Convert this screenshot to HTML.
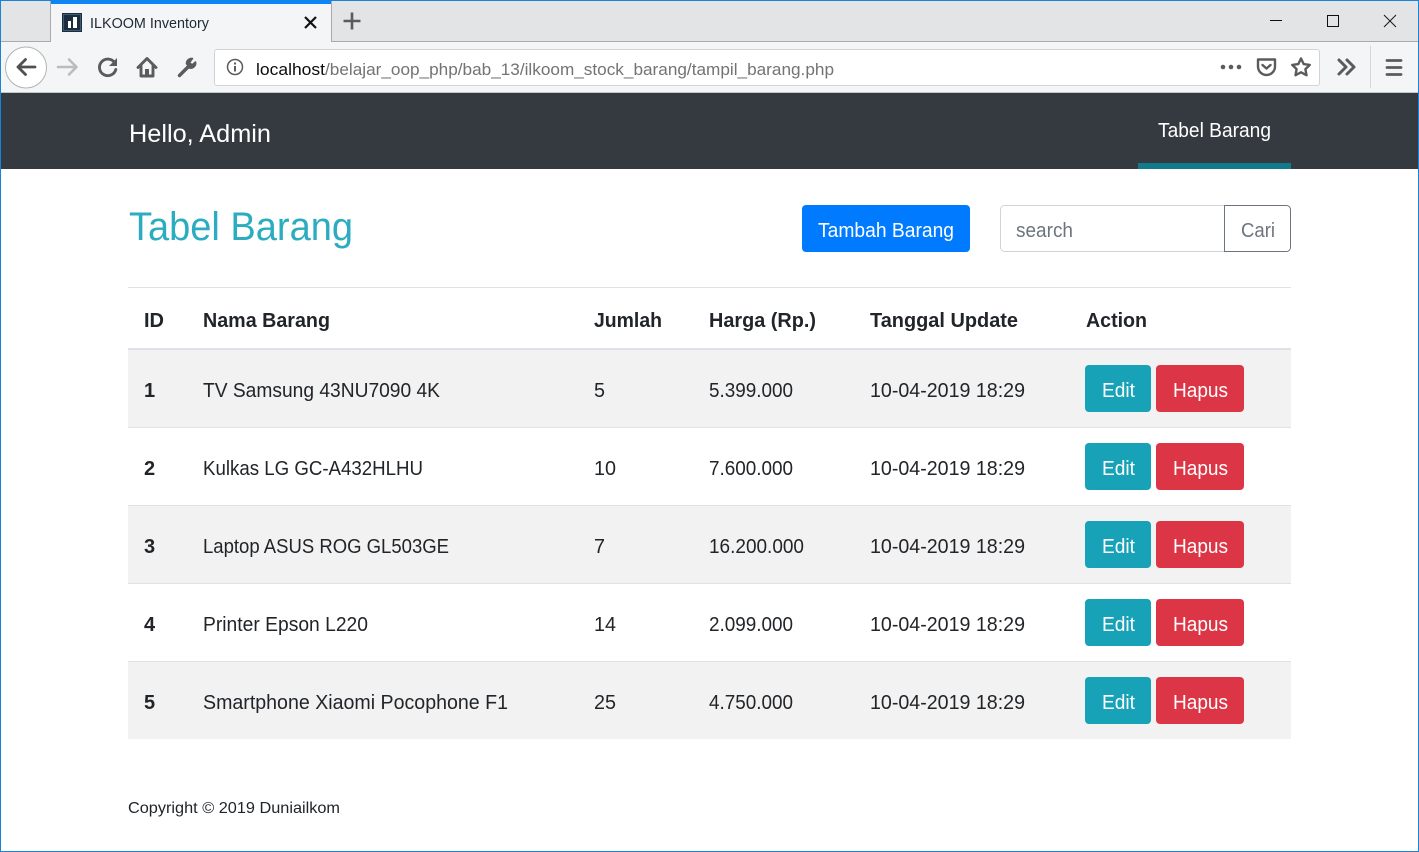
<!DOCTYPE html>
<html lang="en"><head><meta charset="utf-8"><title>ILKOOM Inventory</title>
<style>
html,body{margin:0;padding:0;width:1419px;height:852px;overflow:hidden;background:#fff}
svg{display:block;position:absolute;left:0;top:0}
text{font-family:"Liberation Sans",Arial,sans-serif;fill:#212529;font-size:20px;white-space:pre}
.h{font-weight:700}
.w{fill:#fff}
</style></head><body>
<svg width="1419" height="852" viewBox="0 0 1419 852" xmlns="http://www.w3.org/2000/svg">
<rect width="1419" height="852" fill="#fff"/>
<!-- tab bar -->
<rect x="0" y="0" width="1419" height="41" fill="#e3e4e6"/>
<rect x="0" y="41" width="1419" height="1" fill="#a9aaac"/>
<rect x="50" y="1" width="1" height="41" fill="#a9aaac"/>
<rect x="331" y="1" width="1" height="41" fill="#a9aaac"/>
<rect x="51" y="1" width="280" height="41" fill="#f4f5f7"/>
<rect x="51" y="1" width="280" height="3" fill="#0a84ff"/>
<!-- favicon -->
<rect x="62" y="13" width="20" height="19" fill="#1b2c40"/>
<rect x="63.500" y="14.500" width="17" height="16" fill="none" stroke="#3c5f6e" stroke-width="1"/>
<rect x="68" y="21" width="3" height="7" fill="#fff"/>
<rect x="73" y="17" width="4" height="11" fill="#fff"/>
<text x="90" y="28" textLength="119" lengthAdjust="spacingAndGlyphs" style="font-size:15px;fill:#1f2a33">ILKOOM Inventory</text>
<path d="M305 17L316 28M316 17L305 28" stroke="#111" stroke-width="2.200" fill="none"/>
<path d="M352 12.500V29.500M343.500 21H360.500" stroke="#5b5b5e" stroke-width="2.600" fill="none"/>
<!-- window controls -->
<path d="M1270 20.500H1282" stroke="#111" stroke-width="1" fill="none"/>
<rect x="1327.500" y="15.500" width="11" height="11" stroke="#111" stroke-width="1" fill="none"/>
<path d="M1384 15L1396 27M1396 15L1384 27" stroke="#222" stroke-width="1.100" fill="none"/>
<!-- toolbar -->
<rect x="0" y="42" width="1419" height="50" fill="#f4f5f7"/>
<rect x="0" y="92" width="1419" height="1" fill="#c4c5c7"/>
<circle cx="26" cy="67.500" r="20.500" fill="#fff" stroke="#b3b3b3" stroke-width="1"/>
<path d="M18 67H35M25.500 59.500L18 67L25.500 74.500" fill="none" stroke="#505053" stroke-width="2.800" stroke-linecap="round" stroke-linejoin="round"/>
<path d="M58 67H76M69 59.500L76.500 67L69 74.500" fill="none" stroke="#bcbcbe" stroke-width="2.600" stroke-linecap="round" stroke-linejoin="round"/>
<path d="M114.500 62.500A8.300 8.300 0 1 0 115.800 69.500" fill="none" stroke="#5b5b5e" stroke-width="2.900" stroke-linecap="round"/>
<path d="M117 58V66H109Z" fill="#5b5b5e"/>
<path d="M138 67.500L147 58.500L156 67.500M141 65.500V76H153V65.500" fill="none" stroke="#5b5b5e" stroke-width="2.900" stroke-linecap="round" stroke-linejoin="round"/>
<rect x="145" y="69" width="4" height="7.500" fill="#5b5b5e"/>
<path d="M179.500 75.500L188.500 66.500" stroke="#5b5b5e" stroke-width="3.400" stroke-linecap="round" fill="none"/>
<path d="M186.500 63.500A5 5 0 0 1 192.500 58.500L189.500 62.500L192 65L195.500 62A5 5 0 0 1 189.500 68Z" fill="#5b5b5e" stroke="#5b5b5e" stroke-width="1.600" stroke-linejoin="round"/>
<!-- url bar -->
<rect x="214.500" y="49.500" width="1105" height="36" rx="2.500" fill="#fff" stroke="#d2d3d5"/>
<circle cx="235" cy="67" r="7.500" fill="none" stroke="#5b5b5e" stroke-width="1.500"/>
<rect x="234" y="66" width="2" height="5.500" fill="#5b5b5e"/>
<rect x="234" y="62.500" width="2" height="2" fill="#5b5b5e"/>
<text x="256" y="75" textLength="69" lengthAdjust="spacingAndGlyphs" style="font-size:17px;fill:#0c0c0d">localhost</text>
<text x="325" y="75" textLength="509" lengthAdjust="spacingAndGlyphs" style="font-size:17px;fill:#737373">/belajar_oop_php/bab_13/ilkoom_stock_barang/tampil_barang.php</text>
<circle cx="1223" cy="67" r="2.300" fill="#5b5b5e"/><circle cx="1231" cy="67" r="2.300" fill="#5b5b5e"/><circle cx="1239" cy="67" r="2.300" fill="#5b5b5e"/>
<path d="M1258 59.500H1275V66.500A8.500 8.500 0 0 1 1258 66.500Z" fill="none" stroke="#5b5b5e" stroke-width="2.400" stroke-linejoin="round"/>
<path d="M1262.500 65L1266.500 68.500L1270.500 65" fill="none" stroke="#5b5b5e" stroke-width="2.400" stroke-linecap="round" stroke-linejoin="round"/>
<path d="M1301 58.500L1303.700 64.100L1309.800 64.900L1305.400 69.100L1306.500 75.200L1301 72.300L1295.500 75.200L1296.600 69.100L1292.200 64.900L1298.300 64.100Z" fill="none" stroke="#5b5b5e" stroke-width="2.400" stroke-linejoin="round"/>
<path d="M1339 60L1346 67L1339 74M1347 60L1354 67L1347 74" fill="none" stroke="#5b5b5e" stroke-width="3" stroke-linecap="round" stroke-linejoin="round"/>
<rect x="1370" y="46" width="1" height="42" fill="#d4d5d7"/>
<path d="M1387 60.500H1401M1387 67.500H1401M1387 74.500H1401" stroke="#5b5b5e" stroke-width="2.800" stroke-linecap="round" fill="none"/>
<!-- navbar -->
<rect x="0" y="93" width="1419" height="76" fill="#343a40"/>
<rect x="1138" y="163" width="153" height="6" fill="#117a8b"/>
<text x="129" y="142" textLength="142" lengthAdjust="spacingAndGlyphs" class="w" style="font-size:25px">Hello, Admin</text>
<text x="1158" y="137" textLength="113" lengthAdjust="spacingAndGlyphs" class="w">Tabel Barang</text>
<!-- heading -->
<text x="129" y="240" textLength="224" lengthAdjust="spacingAndGlyphs" style="font-size:40px;fill:#2bacc0">Tabel Barang</text>
<rect x="802" y="205" width="168" height="47" rx="4" fill="#007bff"/>
<text x="818" y="237" textLength="136" lengthAdjust="spacingAndGlyphs" class="w">Tambah Barang</text>
<path d="M1225 205.500H1004.500a4 4 0 0 0 -4 4V247.500a4 4 0 0 0 4 4H1225" fill="#fff" stroke="#ced4da"/>
<path d="M1224.500 205.500H1286.500a4 4 0 0 1 4 4V247.500a4 4 0 0 1 -4 4H1224.500Z" fill="#fff" stroke="#6c757d"/>
<text x="1016" y="237" textLength="57" lengthAdjust="spacingAndGlyphs" style="fill:#6c757d">search</text>
<text x="1241" y="237" textLength="34" lengthAdjust="spacingAndGlyphs" style="fill:#6c757d">Cari</text>
<!-- table -->
<rect x="128" y="287" width="1163" height="1" fill="#dee2e6"/>
<rect x="128" y="348" width="1163" height="2" fill="#dee2e6"/>
<rect x="128" y="350" width="1163" height="77" fill="#f2f2f2"/>
<rect x="128" y="506" width="1163" height="77" fill="#f2f2f2"/>
<rect x="128" y="662" width="1163" height="77" fill="#f2f2f2"/>
<rect x="128" y="427" width="1163" height="1" fill="#dee2e6"/>
<rect x="128" y="505" width="1163" height="1" fill="#dee2e6"/>
<rect x="128" y="583" width="1163" height="1" fill="#dee2e6"/>
<rect x="128" y="661" width="1163" height="1" fill="#dee2e6"/>
<text class="h" x="144" y="327" textLength="20" lengthAdjust="spacingAndGlyphs">ID</text>
<text class="h" x="203" y="327" textLength="127" lengthAdjust="spacingAndGlyphs">Nama Barang</text>
<text class="h" x="594" y="327" textLength="68" lengthAdjust="spacingAndGlyphs">Jumlah</text>
<text class="h" x="709" y="327" textLength="107" lengthAdjust="spacingAndGlyphs">Harga (Rp.)</text>
<text class="h" x="870" y="327" textLength="148" lengthAdjust="spacingAndGlyphs">Tanggal Update</text>
<text class="h" x="1086" y="327" textLength="61" lengthAdjust="spacingAndGlyphs">Action</text>

<text class="h" x="144" y="397">1</text>
<text x="203" y="397" textLength="237" lengthAdjust="spacingAndGlyphs">TV Samsung 43NU7090 4K</text>
<text x="594" y="397" textLength="11" lengthAdjust="spacingAndGlyphs">5</text>
<text x="709" y="397" textLength="84" lengthAdjust="spacingAndGlyphs">5.399.000</text>
<text x="870" y="397" textLength="155" lengthAdjust="spacingAndGlyphs">10-04-2019 18:29</text>
<rect x="1085" y="365" width="66" height="47" rx="4" fill="#17a2b8"/>
<text x="1102" y="397" textLength="33" lengthAdjust="spacingAndGlyphs" class="w">Edit</text>
<rect x="1156" y="365" width="88" height="47" rx="4" fill="#dc3545"/>
<text x="1173" y="397" textLength="55" lengthAdjust="spacingAndGlyphs" class="w">Hapus</text>

<text class="h" x="144" y="475">2</text>
<text x="203" y="475" textLength="220" lengthAdjust="spacingAndGlyphs">Kulkas LG GC-A432HLHU</text>
<text x="594" y="475" textLength="22" lengthAdjust="spacingAndGlyphs">10</text>
<text x="709" y="475" textLength="84" lengthAdjust="spacingAndGlyphs">7.600.000</text>
<text x="870" y="475" textLength="155" lengthAdjust="spacingAndGlyphs">10-04-2019 18:29</text>
<rect x="1085" y="443" width="66" height="47" rx="4" fill="#17a2b8"/>
<text x="1102" y="475" textLength="33" lengthAdjust="spacingAndGlyphs" class="w">Edit</text>
<rect x="1156" y="443" width="88" height="47" rx="4" fill="#dc3545"/>
<text x="1173" y="475" textLength="55" lengthAdjust="spacingAndGlyphs" class="w">Hapus</text>

<text class="h" x="144" y="553">3</text>
<text x="203" y="553" textLength="246" lengthAdjust="spacingAndGlyphs">Laptop ASUS ROG GL503GE</text>
<text x="594" y="553" textLength="11" lengthAdjust="spacingAndGlyphs">7</text>
<text x="709" y="553" textLength="95" lengthAdjust="spacingAndGlyphs">16.200.000</text>
<text x="870" y="553" textLength="155" lengthAdjust="spacingAndGlyphs">10-04-2019 18:29</text>
<rect x="1085" y="521" width="66" height="47" rx="4" fill="#17a2b8"/>
<text x="1102" y="553" textLength="33" lengthAdjust="spacingAndGlyphs" class="w">Edit</text>
<rect x="1156" y="521" width="88" height="47" rx="4" fill="#dc3545"/>
<text x="1173" y="553" textLength="55" lengthAdjust="spacingAndGlyphs" class="w">Hapus</text>

<text class="h" x="144" y="631">4</text>
<text x="203" y="631" textLength="165" lengthAdjust="spacingAndGlyphs">Printer Epson L220</text>
<text x="594" y="631" textLength="22" lengthAdjust="spacingAndGlyphs">14</text>
<text x="709" y="631" textLength="84" lengthAdjust="spacingAndGlyphs">2.099.000</text>
<text x="870" y="631" textLength="155" lengthAdjust="spacingAndGlyphs">10-04-2019 18:29</text>
<rect x="1085" y="599" width="66" height="47" rx="4" fill="#17a2b8"/>
<text x="1102" y="631" textLength="33" lengthAdjust="spacingAndGlyphs" class="w">Edit</text>
<rect x="1156" y="599" width="88" height="47" rx="4" fill="#dc3545"/>
<text x="1173" y="631" textLength="55" lengthAdjust="spacingAndGlyphs" class="w">Hapus</text>

<text class="h" x="144" y="709">5</text>
<text x="203" y="709" textLength="305" lengthAdjust="spacingAndGlyphs">Smartphone Xiaomi Pocophone F1</text>
<text x="594" y="709" textLength="22" lengthAdjust="spacingAndGlyphs">25</text>
<text x="709" y="709" textLength="84" lengthAdjust="spacingAndGlyphs">4.750.000</text>
<text x="870" y="709" textLength="155" lengthAdjust="spacingAndGlyphs">10-04-2019 18:29</text>
<rect x="1085" y="677" width="66" height="47" rx="4" fill="#17a2b8"/>
<text x="1102" y="709" textLength="33" lengthAdjust="spacingAndGlyphs" class="w">Edit</text>
<rect x="1156" y="677" width="88" height="47" rx="4" fill="#dc3545"/>
<text x="1173" y="709" textLength="55" lengthAdjust="spacingAndGlyphs" class="w">Hapus</text>
<!-- footer -->
<text x="128" y="813" textLength="212" lengthAdjust="spacingAndGlyphs" style="font-size:16px">Copyright © 2019 Duniailkom</text>
<!-- window border -->
<rect x="0.500" y="0.500" width="1418" height="851" fill="none" stroke="#1883d7" stroke-width="1"/>
</svg>
</body></html>
